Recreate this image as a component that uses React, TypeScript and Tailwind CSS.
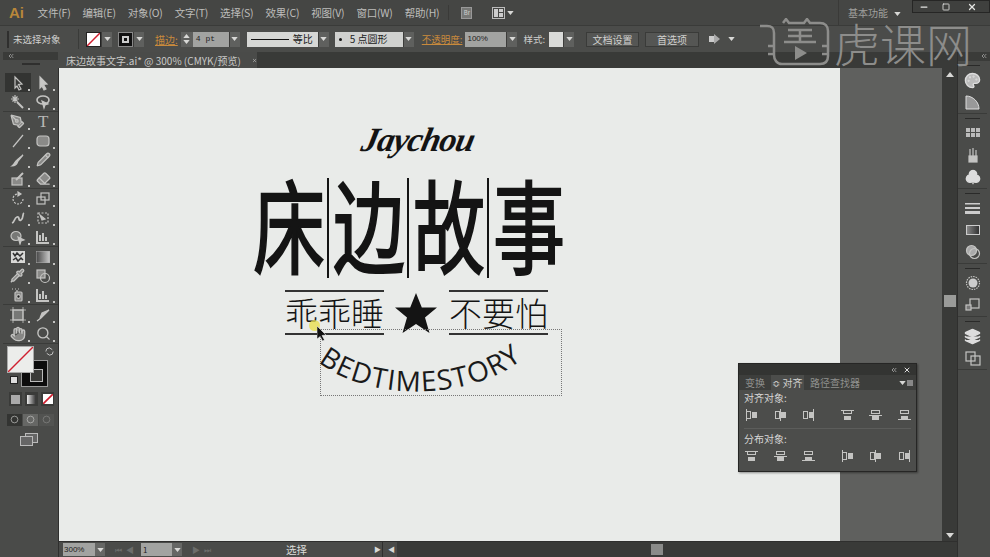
import { ChevronsLeft, Club, Eraser, Hand, Layers, Minus, Palette, PenTool, Pencil, Pipette, Search, Square, X } from "lucide-react";
import type { ReactNode } from "react";

const Caret = ({ className = "" }: { className?: string }) => (
  <svg viewBox="0 0 8 5" className={`w-[7px] h-[4px] ${className}`}><path d="M0 0h8L4 5z" fill="#d8d8d6" /></svg>
);

const DropBtn = ({ w = "w-[11px]" }: { w?: string }) => (
  <div className={`${w} h-[15px] bg-[#5f605e] border-l border-[#3c3c3a] flex items-center justify-center`}><Caret /></div>
);

const Svg = ({ children, size = 16 }: { children: ReactNode; size?: number }) => (
  <svg viewBox="0 0 16 16" width={size} height={size} fill="none" stroke="#c4c4c2" strokeWidth="1.2">{children}</svg>
);

const MENU = ["文件(F)", "编辑(E)", "对象(O)", "文字(T)", "选择(S)", "效果(C)", "视图(V)", "窗口(W)", "帮助(H)"];

// left toolbar, one array per separated group
const TOOL_GROUPS: ReactNode[][][] = [
  [
    [<Svg><path d="M5 2l7 7-3.500.5L11 14l-2 1-2-4-2 2z" fill="#3a3b39" /></Svg>, <Svg><path d="M5 2l7 7-3.500.5L11 14l-2 1-2-4-2 2z" fill="#c8c8c6" /></Svg>],
    [<Svg><path d="M7 8l6 6" strokeWidth="2" /><path d="M5 1v8M1 5h8M2.500 2.500l5 5M7.500 2.500l-5 5" /></Svg>, <Svg><ellipse cx="8" cy="6" rx="6" ry="4" strokeWidth="1.600" /><path d="M7 7l6 3-3 1-1 3z" fill="#c8c8c6" /></Svg>],
  ],
  [
    [<PenTool size={15} color="#c4c4c2" fill="#8a8a88" />, <span className="text-[17px] leading-none text-[#b8b8b6] font-['Liberation_Serif',serif]">T</span>],
    [<Svg><path d="M3 14L13 2" /></Svg>, <Svg><rect x="2" y="3" width="12" height="10" rx="3" fill="#8a8a88" /></Svg>],
    [<Svg><path d="M2 14c4 0 5-2 6-5l5-6-6 5c-2 1-2 4-5 6z" fill="#c4c4c2" /></Svg>, <Pencil size={15} color="#c4c4c2" fill="#8a8a88" />],
    [<Svg><rect x="2" y="7" width="10" height="7" fill="#8a8a88" /><path d="M6 9l7-7" strokeWidth="2" /></Svg>, <Eraser size={15} color="#c4c4c2" fill="#8a8a88" />],
  ],
  [
    [<Svg><path d="M13 8a5 5 0 1 1-5-5" strokeDasharray="2 1.300" /><path d="M8 1l3 2-3 2z" fill="#c4c4c2" /></Svg>, <Svg><rect x="2" y="6" width="8" height="7" /><rect x="6" y="2" width="8" height="7" /></Svg>],
    [<Svg><path d="M2 13c3-1 2-5 5-6s1 5 4 3 1-6 3-7" strokeWidth="1.800" /></Svg>, <Svg><rect x="3" y="3" width="10" height="10" strokeDasharray="2 1.500" /><path d="M5 5l5 4-3 1z" fill="#c4c4c2" /></Svg>],
    [<Svg><ellipse cx="6" cy="7" rx="5" ry="4.500" fill="#777876" /><path d="M8 8l6 3-3 1-1 3z" fill="#c4c4c2" /></Svg>, <Svg><path d="M2 2v12h12M5 12V6M8 12V4M11 12V8" strokeWidth="2" /></Svg>],
  ],
  [
    [<Svg><rect x="1" y="2" width="14" height="12" fill="#d8d8d6" strokeWidth="0" /><path d="M3 4l2 3 2-3 3 3 3-3M3 11l3-2 2 3 3-3 2 2" stroke="#333" strokeWidth="1.500" /></Svg>, <svg width="14" height="12"><defs><linearGradient id="tg"><stop offset="0" stopColor="#444" /><stop offset="1" stopColor="#ccc" /></linearGradient></defs><rect width="14" height="12" x="0" y="0" fill="url(#tg)" stroke="#aaa" /></svg>],
    [<Pipette size={15} color="#c4c4c2" fill="#8a8a88" />, <Svg><rect x="2" y="2" width="8" height="8" fill="#8a8a88" /><circle cx="10" cy="10" r="4.500" /></Svg>],
    [<Svg><rect x="5" y="5" width="7" height="9" rx="1" fill="#8a8a88" /><circle cx="8.500" cy="9.500" r="1.800" fill="#222" /><path d="M2 2h1M5 2h1M8 2h1M7 3v2" /></Svg>, <Svg><path d="M2 2v12h12M5 12V7M8 12V4M11 12V8" strokeWidth="2" /></Svg>],
  ],
  [
    [<Svg><rect x="3" y="3" width="10" height="10" fill="#777876" /><path d="M0 3h16M0 13h16M3 0v16M13 0v16" strokeWidth=".8" /></Svg>, <Svg><path d="M2 14l4-3 8-8-7 3-2 5" fill="#c4c4c2" /></Svg>],
    [<Hand size={16} color="#c4c4c2" fill="#c4c4c2" fillOpacity=".5" />, <Search size={15} color="#c4c4c2" strokeWidth={2.200} />],
  ],
];

const Corner = () => <span className="absolute right-[1px] bottom-[1px] w-[2px] h-[2px] bg-[#c4c4c2]" />;

const Toolbar = () => (
  <div className="w-[59px] h-full shrink-0 bg-[#4a4b49] flex flex-col border-r border-[#2f2f2e] pl-[3px]">
    <div className="h-[8px] bg-[#3a3b39] flex items-center pl-[4px]"><ChevronsLeft size={8} color="#bbb" /></div>
    <div className="h-[13px] flex items-start justify-center pt-[3px]"><div className="w-[18px] h-[2px] bg-[#2f2f2e]" /></div>
    {TOOL_GROUPS.map((group, i) => (
      <div key={i} className="border-b border-[#3a3b39]">
        {group.map((row, j) => (
          <div key={j} className="h-[19px] grid grid-cols-2 pl-[2px] pr-[2px]">
            {row.map((tool, k) => (
              <div key={k} className={`relative flex items-center justify-center ${i === 0 && j === 0 && k === 0 ? "bg-[#333432]" : ""}`}>
                {tool}
                <Corner />
              </div>
            ))}
          </div>
        ))}
      </div>
    ))}
    <div className="relative h-[48px] shrink-0">
      <div className="absolute left-[4px] top-[2px] w-[27px] h-[27px] bg-[#ecedeb] border border-[#aaa] z-10">
        <svg viewBox="0 0 27 27" className="w-full h-full"><path d="M0 27L27 0" stroke="#cf2030" strokeWidth="1.500" /></svg>
      </div>
      <div className="absolute left-[18px] top-[16px] w-[27px] h-[27px] bg-[#0d0d0d] border border-[#999] flex items-center justify-center">
        <div className="w-[13px] h-[13px] border border-[#bbb] bg-[#3a3a38] ml-[4px] mt-[4px]" />
      </div>
      <svg viewBox="0 0 12 12" className="absolute left-[41px] top-[2px] w-[11px] h-[11px]" fill="none" stroke="#ccc"><path d="M2 6a4 4 0 0 1 4-4l3 2M10 6a4 4 0 0 1-4 4L3 8" /></svg>
      <div className="absolute left-[7px] top-[32px] w-[8px] h-[8px] bg-[#ddd] border border-[#222]" />
    </div>
    <div className="h-[14px] flex items-center gap-[3px] pl-[6px]">
      <div className="w-[13px] h-[14px] bg-[#3a3b39] flex items-center justify-center"><div className="w-[9px] h-[9px] bg-[#aaa]" /></div>
      <div className="w-[13px] h-[14px] bg-[#3a3b39] flex items-center justify-center"><div className="w-[9px] h-[9px] bg-gradient-to-r from-[#eee] to-[#333]" /></div>
      <div className="w-[13px] h-[14px] bg-[#3a3b39] flex items-center justify-center"><svg viewBox="0 0 9 9" className="w-[10px] h-[10px] bg-white"><path d="M0 9L9 0" stroke="#d02030" strokeWidth="1.500" /></svg></div>
    </div>
    <div className="h-[15px] mt-[6px] flex items-center pl-[4px] gap-[1px]">
      <div className="w-[15px] h-[12px] bg-[#333432] flex items-center justify-center"><Svg size={9}><circle cx="8" cy="8" r="6" /></Svg></div>
      <div className="w-[15px] h-[12px] bg-[#666765] flex items-center justify-center"><Svg size={9}><circle cx="8" cy="8" r="6" /></Svg></div>
      <div className="w-[15px] h-[12px] bg-[#5a5b59] flex items-center justify-center opacity-50"><Svg size={9}><circle cx="8" cy="8" r="6" /></Svg></div>
    </div>
    <div className="flex justify-center mt-[6px] pr-[3px]">
      <svg width="18" height="13" fill="none" stroke="#bbb"><rect x="5.500" y="0.500" width="12" height="9" fill="#666" /><rect x="0.500" y="3.500" width="12" height="9" fill="#666" /></svg>
    </div>
  </div>
);

const DOCK: ReactNode[][] = [
  [<Palette size={17} color="#ddd" fill="#bbb" />, <svg width="15" height="15"><path d="M1 14V1c7 0 13 6 13 13z" fill="#999" stroke="#ddd" /></svg>],
  [
    <svg width="14" height="10" fill="#bbb"><rect width="4" height="4" /><rect x="5" width="4" height="4" /><rect x="10" width="4" height="4" /><rect y="5" width="4" height="4" /><rect x="5" y="5" width="4" height="4" /><rect x="10" y="5" width="4" height="4" /></svg>,
    <Svg><path d="M5 9V2M8 9V1M11 9V3" /><rect x="4" y="9" width="8" height="6" fill="#c4c4c2" /></Svg>,
    <Club size={16} color="#ddd" fill="#ddd" />,
  ],
  [
    <svg width="15" height="11" fill="#ccc"><rect width="15" height="1.500" /><rect y="4" width="15" height="2" /><rect y="8" width="15" height="3" /></svg>,
    <div className="w-[14px] h-[10px] border border-[#ccc] bg-gradient-to-r from-[#888] to-[#333]" />,
    <Svg><circle cx="6.500" cy="6.500" r="5" fill="#aaa" /><circle cx="9.500" cy="9.500" r="5" /></Svg>,
  ],
  [
    <Svg><circle cx="8" cy="8" r="4.500" fill="#ccc" strokeWidth="0" /><circle cx="8" cy="8" r="6.500" strokeDasharray="1.500 1" /></Svg>,
    <Svg><rect x="5" y="2" width="9" height="9" /><rect x="1" y="8" width="5" height="5" fill="#777" /></Svg>,
  ],
  [
    <Layers size={17} color="#ddd" fill="#ddd" />,
    <Svg><rect x="1" y="2" width="9" height="9" /><rect x="6" y="6" width="9" height="9" /></Svg>,
  ],
];

const Dock = () => (
  <div className="w-[33px] h-full shrink-0 bg-[#4a4b49] border-l border-[#2f2f2e] flex flex-col pr-[3px]">
    <div className="h-[9px] bg-[#3a3b39] flex justify-end pr-[2px] -mr-[3px]"><ChevronsLeft size={8} color="#bbb" /></div>
    {DOCK.map((group, i) => (
      <div key={i} className="border-b border-[#3a3b39] pt-[4px]">
        <div className="w-[15px] h-[1px] bg-[#2a2a29] mx-auto mb-[3px]" />
        {group.map((icon, j) => (
          <div key={j} className="h-[22px] flex items-center justify-center">{icon}</div>
        ))}
      </div>
    ))}
  </div>
);

const AlignGlyph = ({ v, off }: { v?: boolean; off: number }) => (
  <svg width="13" height="12" fill="none" stroke="#c4c4c2" strokeWidth="1">
    {v ? (
      <>
        <path d={`M${off + 0.500} 0v12`} />
        <rect x="1.500" y="2.500" width="4" height="7" />
        <rect x="7.500" y="3.500" width="4" height="5" fill="#c4c4c2" />
      </>
    ) : (
      <>
        <path d={`M0 ${off + 0.500}h13`} />
        <rect x="2.500" y="1.500" width="8" height="3" />
        <rect x="3.500" y="7.500" width="6" height="3" fill="#c4c4c2" />
      </>
    )}
  </svg>
);

const AlignPanel = () => (
  <div className="absolute left-[738px] top-[363px] w-[179px] h-[109px] bg-[#4c4d4b] border border-[#262625] shadow-[1px_1px_2px_rgba(0,0,0,.4)] text-[#d2d2d0] text-[10px]">
    <div className="h-[11px] bg-[#333432] flex items-center justify-end gap-[5px] pr-[5px]">
      <ChevronsLeft size={8} color="#ccc" />
      <X size={8} color="#ddd" strokeWidth={3} />
    </div>
    <div className="h-[15px] bg-[#3d3e3c] flex items-end">
      <span className="px-[6px] h-[14px] leading-[14px] text-[#8f908e]">变换</span>
      <span className="h-[15px] w-[33px] bg-[#4c4d4b] flex items-center justify-center">≎ 对齐</span>
      <span className="pl-[6px] h-[14px] leading-[14px] text-[#8f908e]">路径查找器</span>
      <div className="ml-auto flex items-center gap-[1px] pr-[3px] h-[14px]"><Caret className="w-[5px] h-[3px]" /><div className="w-[6px] h-[6px] bg-[#888]" /></div>
    </div>
    <div className="px-[5px] pt-[1px] leading-[14px] text-[#d8d8d6]">对齐对象:</div>
    <div className="flex pl-[6px] pt-[4px]">
      <div className="w-[29px]"><AlignGlyph v off={1} /></div>
      <div className="w-[28px]"><AlignGlyph v off={6} /></div>
      <div className="w-[39px]"><AlignGlyph v off={11} /></div>
      <div className="w-[28px]"><AlignGlyph off={1} /></div>
      <div className="w-[29px]"><AlignGlyph off={6} /></div>
      <div><AlignGlyph off={10} /></div>
    </div>
    <div className="h-[1px] bg-[#5c5d5b] mx-[5px] mt-[7px]" />
    <div className="px-[5px] pt-[3px] leading-[14px] text-[#d8d8d6]">分布对象:</div>
    <div className="flex pl-[6px] pt-[4px]">
      <div className="w-[29px]"><AlignGlyph off={1} /></div>
      <div className="w-[28px]"><AlignGlyph off={6} /></div>
      <div className="w-[39px]"><AlignGlyph off={10} /></div>
      <div className="w-[28px]"><AlignGlyph v off={1} /></div>
      <div className="w-[29px]"><AlignGlyph v off={6} /></div>
      <div><AlignGlyph v off={11} /></div>
    </div>
  </div>
);

const Artwork = () => (
  <div className="relative w-[781px] h-full bg-[#e9ebe9] shrink-0 overflow-hidden font-['Noto_Sans_CJK_SC',sans-serif] text-[#141414]">
    <div className="absolute left-[303px] top-[49px] font-['Liberation_Serif',serif] italic font-bold text-[34px] leading-[46px] -skew-x-12 tracking-[-1px]">Jaychou</div>
    {/* title row, glyphs stretched taller */}
    <div className="absolute left-[194px] top-[108px] flex items-center h-[104px]">
      {["床", "边", "故", "事"].map((c, i) => (
        <div key={c} className="flex items-center">
          {i > 0 && <div className="w-[2px] h-[100px] bg-[#141414] mx-[4px]" />}
          <span className="w-[70px] text-center text-[72px] font-normal leading-none scale-y-[1.4] -translate-y-[5px] [-webkit-text-stroke:1.5px_#141414]">{c}</span>
        </div>
      ))}
    </div>
    <div className="absolute left-[226px] top-[222px] w-[99px] border-y-2 border-[#333] h-[45px] flex items-center justify-center text-[33px] font-light leading-none whitespace-nowrap">乖乖睡</div>
    <svg viewBox="0 0 42 40" className="absolute left-[336px] top-[225px] w-[42px] h-[40px]"><path d="M21 0l5.800 14.500H42L30 24.500 34.500 40 21 31 7.500 40 12 24.500 0 14.500h15.200z" fill="#141414" /></svg>
    <div className="absolute left-[390px] top-[222px] w-[99px] border-y-2 border-[#333] h-[45px] flex items-center justify-center text-[33px] font-light leading-none whitespace-nowrap">不要怕</div>
    <div className="absolute left-[261px] top-[261px] w-[242px] h-[67px] border border-dotted border-[#777]" />
    <svg width="260" height="80" className="absolute left-[250px] top-[270px]">
      <defs><path id="arc" d="M9 24C60 64 160 64 215 20" /></defs>
      <text fontFamily="'Open Sans',sans-serif" fontWeight="400" fontSize="28" fill="#1a1a1a" letterSpacing="1.200"><textPath href="#arc">BEDTIMESTORY</textPath></text>
    </svg>
    <div className="absolute left-[250px] top-[252px] w-[11px] h-[11px] rounded-full bg-[#e8e050]/80" />
    <svg viewBox="0 0 10 15" className="absolute left-[258px] top-[258px] w-[10px] h-[15px]"><path d="M0 0l9 9-4 .5 2.500 4.500-2 1-2.300-4.500L0 13z" fill="#111" stroke="#fff" strokeWidth=".5" /></svg>
  </div>
);

const Watermark = () => (
  <div className="absolute left-[760px] top-[18px] flex items-center text-[#8d8d8b] pointer-events-none">
    <svg width="74" height="48" viewBox="0 0 74 48" fill="none" stroke="#8d8d8b" strokeWidth="2.500">
      <path d="M0 8h7c5 0 7 2 7 7v22c0 5 3 9 8 9h38c6 0 8-3 8-8V13c0-5-3-8-8-8H50l-3-4-3 4H29l-3-4-3 4" />
      <path d="M8 28h6M8 36h6M62 28h6M62 36h6M28 12h24M28 18h24M40 12v12M24 24h32" />
      <path d="M35 28l12 7-12 7z" fill="#8d8d8b" stroke="none" />
    </svg>
    <span className="font-['Noto_Sans_CJK_SC',sans-serif] font-light text-[46px] leading-none whitespace-nowrap">虎课网</span>
  </div>
);

export default function App() {
  return (
    <div className="relative w-[990px] h-[557px] overflow-hidden flex flex-col bg-[#4a4b49] font-['Noto_Sans_CJK_SC','Noto_Sans',sans-serif] text-[10px] text-[#d0d0ce]">
      {/* menu bar */}
      <div className="h-[25px] shrink-0 bg-[#454644] flex items-center">
        <span className="w-[38px] pl-[9px] text-[15px] font-bold leading-none text-[#b8873a] font-['Liberation_Sans',sans-serif]">Ai</span>
        <div className="flex gap-[12px] text-[#bdbdbb]">
          {MENU.map((m) => <span key={m} className="whitespace-nowrap text-[10.500px] tracking-[-0.2px]">{m}</span>)}
        </div>
        <div className="w-[1px] h-[15px] bg-[#3a3a38] ml-[9px]" />
        <div className="w-[11px] h-[12px] ml-[12px] bg-[#777876] border border-[#999] text-[6px] leading-[10px] text-center">Br</div>
        <div className="w-[13px] h-[12px] ml-[20px] border border-[#bbb] grid grid-cols-2 gap-[1px] p-[1px]"><i className="bg-[#ccc] row-span-2" /><i className="bg-[#ccc]" /><i className="bg-[#ccc]" /></div>
        <Caret className="ml-[2px]" />
        <div className="w-[1px] h-[25px] bg-[#3a3a38] ml-[324px]" />
        <span className="ml-[9px] text-[10px] text-[#a0a09e] whitespace-nowrap">基本功能</span>
        <Caret className="ml-[6px] mt-[3px] w-[4px] h-[3px]" />
        <div className="self-start ml-[11px] h-[13px] w-[79px] flex border border-[#262625] bg-[#3f403e]">
          <div className="w-[22px] flex items-center justify-center"><Minus size={10} strokeWidth={3} color="#e4e4e2" /></div>
          <div className="w-[21px] flex items-center justify-center"><Square size={8} strokeWidth={2.500} color="#e4e4e2" /></div>
          <div className="flex-1 flex items-center justify-center"><X size={10} strokeWidth={3} color="#e4e4e2" /></div>
        </div>
      </div>
      {/* control bar */}
      <div className="h-[27px] shrink-0 bg-[#4b4c4a] border-t border-[#3a3b39] flex items-center whitespace-nowrap">
        <div className="w-[2px] h-[17px] bg-[#2f2f2e] ml-[7px]" />
        <span className="ml-[4px] w-[65px] text-[9.500px]">未选择对象</span>
        <div className="w-[1px] h-[20px] bg-[#3a3b39]" />
        <div className="ml-[7px] w-[15px] h-[15px] bg-white border border-[#222]"><svg viewBox="0 0 13 13" className="w-full h-full"><path d="M0 13L13 0" stroke="#cf2030" strokeWidth="1.500" /></svg></div>
        <DropBtn />
        <div className="ml-[6px] w-[15px] h-[15px] bg-[#111] border border-[#888] flex items-center justify-center"><div className="w-[7px] h-[7px] border-2 border-[#ccc]" /></div>
        <DropBtn />
        <span className="ml-[11px] text-[#c98a3c] underline text-[10px]">描边:</span>
        <div className="ml-[3px] w-[12px] h-[15px] bg-[#5f605e] flex flex-col items-center justify-center gap-[2px]"><Caret className="rotate-180 w-[5px] h-[3px]" /><Caret className="w-[5px] h-[3px]" /></div>
        <div className="w-[36px] h-[15px] bg-[#a2a3a1] text-[#222] pl-[3px] leading-[14px] text-[8px] font-['Liberation_Mono',monospace]">4 pt</div>
        <DropBtn />
        <div className="ml-[7px] w-[71px] h-[15px] bg-[#d6d7d5] flex items-center pl-[4px] gap-[4px] text-[#222] text-[10px] leading-none">
          <div className="w-[38px] h-[1px] bg-[#111]" />等比
        </div>
        <DropBtn />
        <div className="ml-[6px] w-[68px] h-[15px] bg-[#d0d1cf] flex items-center pl-[4px] text-[#222] text-[10px] leading-none">
          <span className="w-[3px] h-[3px] rounded-full bg-[#111] mr-[8px]" />5 点圆形
        </div>
        <DropBtn />
        <span className="ml-[8px] text-[#c98a3c] underline text-[9.500px]">不透明度:</span>
        <div className="ml-[3px] w-[41px] h-[15px] bg-[#a2a3a1] text-[#222] pl-[2px] leading-[14px] text-[8px] font-['Liberation_Sans',sans-serif]">100%</div>
        <DropBtn />
        <span className="ml-[6px] text-[9.500px]">样式:</span>
        <div className="ml-[4px] w-[14px] h-[15px] bg-[#d9dad8]" />
        <DropBtn />
        <div className="ml-[12px] w-[53px] h-[15px] bg-[#555654] border border-[#3a3b39] text-center leading-[13px]">文档设置</div>
        <div className="ml-[6px] w-[54px] h-[15px] bg-[#555654] border border-[#3a3b39] text-center leading-[13px]">首选项</div>
        <svg width="15" height="12" className="ml-[9px]"><rect x="1" y="3" width="7" height="6" fill="#ccc" /><path d="M6 1l6 5-6 5z" fill="#aaa" /></svg>
        <Caret className="ml-[5px]" />
      </div>
      {/* body */}
      <div className="flex-1 min-h-0 flex">
        <Toolbar />
        <div className="flex-1 min-w-0 flex flex-col">
          <div className="h-[16px] shrink-0 bg-[#393a38] flex">
            <div className="w-[199px] bg-[#4a4b49] ml-[-1px] flex items-center pl-[8px] gap-[11px] text-[10px] text-[#c8c8c6] whitespace-nowrap">
              <span>床边故事文字.ai* @ 300% (CMYK/预览)</span>
              <X size={7} strokeWidth={3} color="#bbb" />
            </div>
          </div>
          <div className="flex-1 min-h-0 flex">
            <div className="flex-1 min-w-0 flex bg-[#5f605e]">
              <Artwork />
            </div>
            <div className="w-[15px] shrink-0 bg-[#393a38] flex flex-col items-center pt-[4px] pb-[3px]">
              <Caret className="rotate-180 w-[8px] h-[5px]" />
              <div className="w-[12px] h-[12px] bg-[#9a9b99] mt-[218px]" />
              <Caret className="mt-auto w-[8px] h-[5px]" />
            </div>
          </div>
          {/* status bar */}
          <div className="h-[16px] shrink-0 bg-[#4a4b49] border-t border-[#2f2f2e] flex items-center text-[#d0d0ce] whitespace-nowrap">
            <div className="ml-[4px] w-[32px] h-[13px] bg-[#a2a3a1] text-[#222] text-[8px] leading-[13px] pl-[1px] font-['Liberation_Sans',sans-serif]">300%</div>
            <div className="w-[10px] h-[13px] bg-[#666765] flex items-center justify-center"><Caret /></div>
            <span className="ml-[10px] w-[25px] text-[#6c6d6b] text-[8px] tracking-[4px]">⏮◀</span>
            <div className="ml-[1px] w-[31px] h-[13px] bg-[#a2a3a1] text-[#222] text-[8px] leading-[13px] pl-[2px]">1</div>
            <div className="w-[10px] h-[13px] bg-[#666765] flex items-center justify-center"><Caret /></div>
            <span className="ml-[10px] w-[24px] text-[#6c6d6b] text-[8px] tracking-[4px]">▶⏭</span>
            <span className="ml-[70px] w-[88px] text-[10.500px] text-[#dcdcda]">选择</span>
            <span className="w-[6px] text-[7px] text-[#d8d8d6]">▶</span>
            <div className="w-[1px] h-[15px] bg-[#2f2f2e] ml-[2px]" />
            <span className="ml-[5px] w-[6px] text-[7px] text-[#d8d8d6]">◀</span>
            <div className="flex-1 h-full bg-[#393a38] relative ml-[3px]">
              <div className="absolute left-[254px] top-[2px] w-[12px] h-[11px] bg-[#8a8b89]" />
            </div>
          </div>
        </div>
        <Dock />
      </div>
      <Watermark />
      <AlignPanel />
    </div>
  );
}
